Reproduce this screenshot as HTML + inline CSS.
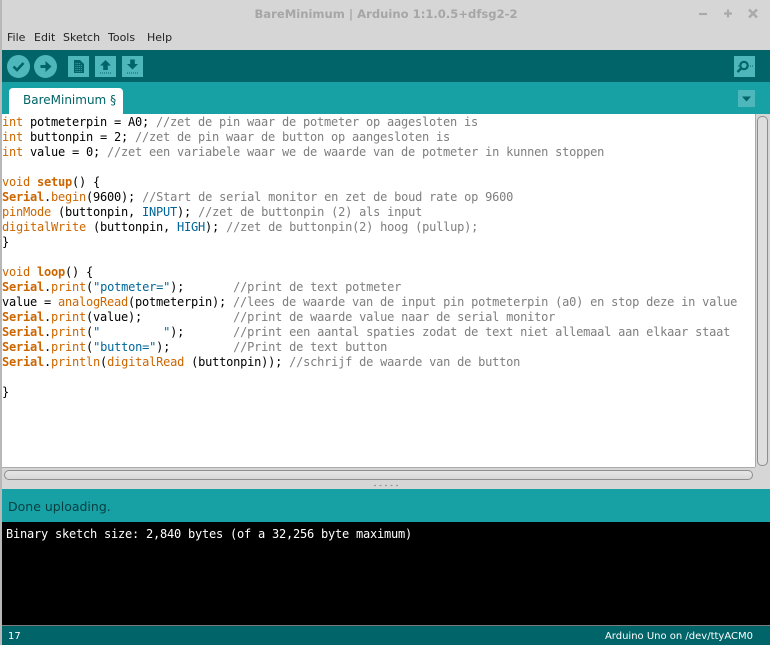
<!DOCTYPE html>
<html><head><meta charset="utf-8">
<style>
html,body{margin:0;padding:0}
body{width:770px;height:645px;position:relative;overflow:hidden;background:#d6d6d6;font-family:"DejaVu Sans","Liberation Sans",sans-serif}
.a{position:absolute}
pre{margin:0;font-family:"DejaVu Sans Mono","Liberation Mono",monospace;font-size:12px;letter-spacing:-.224px;line-height:15px;color:#000}
.k{color:#cc6600}.b{color:#cc6600;font-weight:bold}.c{color:#7e7e7e}.l{color:#006699}.s{color:#006699}
.menu{top:30px;font-size:11px;color:#222;line-height:16px}
svg{position:absolute;left:0;top:0}
</style></head>
<body>
<div class="a" style="left:0;top:0;width:2px;height:645px;background:#b8b8b8"></div>
<div class="a" style="left:2px;top:0;width:768px;height:50px;background:#d6d6d6"></div>
<div class="a" style="left:0;top:6px;width:770px;text-align:center;font-size:11.6px;font-weight:bold;color:#a6a6a6;line-height:16px;padding-left:1px">BareMinimum | Arduino 1:1.0.5+dfsg2-2</div>
<svg class="a" width="770" height="50" style="left:0;top:0">
<path d="M699 14h8" stroke="#aaa" stroke-width="2.2"/>
<path d="M724 13.500h8M728 9.500v8" stroke="#aaa" stroke-width="2.200"/>
<path d="M749 9.500l8 8M757 9.500l-8 8" stroke="#aaa" stroke-width="2.500"/>
</svg>
<div class="a menu" style="left:7px">File</div>
<div class="a menu" style="left:34px">Edit</div>
<div class="a menu" style="left:63px">Sketch</div>
<div class="a menu" style="left:108px">Tools</div>
<div class="a menu" style="left:147px">Help</div>

<div class="a" style="left:2px;top:50px;width:768px;height:32px;background:#006468"></div>
<div class="a" style="left:2px;top:82px;width:768px;height:32px;background:#17a1a5"></div>

<svg class="a" width="770" height="114" style="left:0;top:0">
<circle cx="18.500" cy="66.500" r="11.500" fill="#4db7bb"/>
<path d="M13.500 66.500l3.500 3.500 6.500-7" fill="none" stroke="#006468" stroke-width="2.600"/>
<circle cx="45.500" cy="66.500" r="11.500" fill="#4db7bb"/>
<path d="M40.500 65h5v-4l6 5.500-6 5.500v-4h-5z" fill="#006468"/>
<rect x="68" y="56" width="21" height="21" fill="#4db7bb"/>
<path d="M74 60h6l4 4v9H74z" fill="#006468"/>
<path d="M75.500 63.500h5M75.500 65.500h7M75.500 67.500h7M75.500 69.500h7M75.500 71.500h7" stroke="#4db7bb" stroke-width=".8" stroke-dasharray="1 .8"/>
<rect x="95" y="56" width="21" height="21" fill="#4db7bb"/>
<path d="M105.500 60l5.500 5.500h-3.200V70h-4.600v-4.500H100z" fill="#006468"/>
<path d="M100 73h11" stroke="#006468" stroke-width="1" stroke-dasharray="1 1"/>
<rect x="122" y="56" width="21" height="21" fill="#4db7bb"/>
<path d="M130.200 59.500h4.600V64H138l-5.500 5.500L127 64h3.200z" fill="#006468"/>
<path d="M127 73h11" stroke="#006468" stroke-width="1" stroke-dasharray="1 1"/>
<rect x="734" y="56" width="21" height="21" fill="#4db7bb"/>
<circle cx="744" cy="65.500" r="3.700" fill="none" stroke="#006468" stroke-width="2.200"/>
<path d="M741 68.500l-3.500 3.500" stroke="#006468" stroke-width="2.400"/>
<path d="M738 66h1M750 66h3" stroke="#006468" stroke-width="1" stroke-dasharray="1 1"/>
<rect x="738" y="90" width="17" height="17" fill="#4db7bb"/>
<path d="M742 96.500h9l-4.500 5z" fill="#006468"/>
</svg>

<div class="a" style="left:9px;top:88px;width:114px;height:26px;background:#fff;border-radius:4px 4px 0 0"></div>
<div class="a" style="left:23px;top:92px;font-size:12px;line-height:16px;color:#006468">BareMinimum §</div>

<div class="a" style="left:2px;top:114px;width:753px;height:353px;background:#fff"></div>
<pre class="a" style="left:2px;top:115px"><span class="k">int</span> potmeterpin = A0; <span class="c">//zet de pin waar de potmeter op aagesloten is</span>
<span class="k">int</span> buttonpin = 2; <span class="c">//zet de pin waar de button op aangesloten is</span>
<span class="k">int</span> value = 0; <span class="c">//zet een variabele waar we de waarde van de potmeter in kunnen stoppen</span>

<span class="k">void</span> <span class="b">setup</span>() {
<span class="b">Serial</span>.<span class="k">begin</span>(9600); <span class="c">//Start de serial monitor en zet de boud rate op 9600</span>
<span class="k">pinMode</span> (buttonpin, <span class="l">INPUT</span>); <span class="c">//zet de buttonpin (2) als input</span>
<span class="k">digitalWrite</span> (buttonpin, <span class="l">HIGH</span>); <span class="c">//zet de buttonpin(2) hoog (pullup);</span>
}

<span class="k">void</span> <span class="b">loop</span>() {
<span class="b">Serial</span>.<span class="k">print</span>(<span class="s">"potmeter="</span>);       <span class="c">//print de text potmeter</span>
value = <span class="k">analogRead</span>(potmeterpin); <span class="c">//lees de waarde van de input pin potmeterpin (a0) en stop deze in value</span>
<span class="b">Serial</span>.<span class="k">print</span>(value);             <span class="c">//print de waarde value naar de serial monitor</span>
<span class="b">Serial</span>.<span class="k">print</span>(<span class="s">"         "</span>);       <span class="c">//print een aantal spaties zodat de text niet allemaal aan elkaar staat</span>
<span class="b">Serial</span>.<span class="k">print</span>(<span class="s">"button="</span>);         <span class="c">//Print de text button</span>
<span class="b">Serial</span>.<span class="k">println</span>(<span class="k">digitalRead</span> (buttonpin)); <span class="c">//schrijf de waarde van de button</span>

}</pre>

<!-- vertical scrollbar -->
<div class="a" style="left:755px;top:114px;width:15px;height:355px;background:#d6d6d6"></div>
<div class="a" style="left:755px;top:114px;width:1px;height:353px;background:#aaa"></div>
<div class="a" style="left:757px;top:116px;width:9px;height:348px;background:#dedede;border:1px solid #8e8e8e;border-radius:5px"></div>
<!-- horizontal scrollbar -->
<div class="a" style="left:2px;top:467px;width:753px;height:1px;background:#aaa"></div>
<div class="a" style="left:2px;top:468px;width:768px;height:13px;background:#d6d6d6"></div>
<div class="a" style="left:4px;top:470px;width:747px;height:8px;background:linear-gradient(#e6e6e6,#d8d8d8);border:1px solid #8e8e8e;border-radius:5px"></div>
<!-- divider -->
<div class="a" style="left:2px;top:481px;width:768px;height:8px;background:#d6d6d6"></div>
<svg class="a" width="770" height="8" style="left:0;top:481px"><path d="M374 4.500h24" stroke="#999" stroke-width="1.200" stroke-dasharray="2 3.500"/></svg>
<!-- status -->
<div class="a" style="left:2px;top:489px;width:768px;height:33px;background:#17a1a5"></div>
<div class="a" style="left:8px;top:499px;font-size:12.500px;line-height:16px;color:#063f42">Done uploading.</div>
<div class="a" style="left:2px;top:522px;width:768px;height:103px;background:#000"></div>
<pre class="a" style="left:6px;top:527px;color:#fff">Binary sketch size: 2,840 bytes (of a 32,256 byte maximum)</pre>
<!-- footer -->
<div class="a" style="left:2px;top:625px;width:768px;height:20px;background:#006468;border-top:1px solid #7a7a7a;box-sizing:border-box"></div>
<div class="a" style="left:8px;top:630px;font-size:10px;line-height:14px;color:#fff">17</div>
<div class="a" style="right:17px;top:630px;font-size:10px;line-height:14px;color:#fff;white-space:nowrap">Arduino Uno on /dev/ttyACM0</div>
</body></html>
